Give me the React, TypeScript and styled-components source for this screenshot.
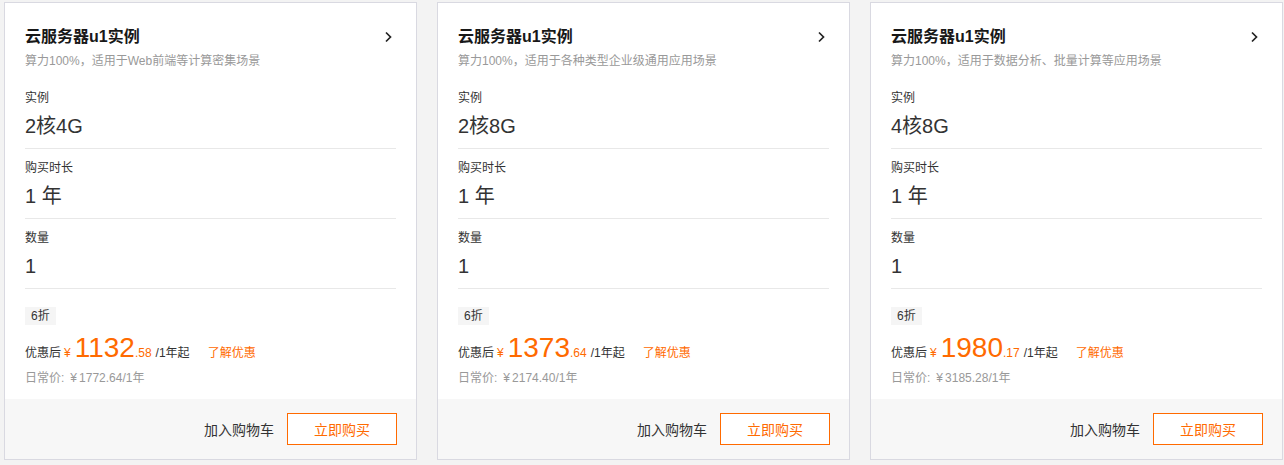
import React from "react";
import styled, { createGlobalStyle } from "styled-components";

const GlobalStyle = createGlobalStyle`
  html, body {
    margin: 0;
    padding: 0;
    background: #f3f3f3;
  }
  body {
    font-family: "Liberation Sans", Arial, "Noto Sans CJK SC", sans-serif;
    color: #333;
    -webkit-font-smoothing: antialiased;
  }
  * { box-sizing: border-box; }
`;

const Page = styled.div`
  display: flex;
  gap: 20px;
  padding: 2px 0 0 4px;
`;

const Card = styled.div`
  width: 413px;
  height: 458px;
  background: #fff;
  border: 1px solid #d9d9e1;
  display: flex;
  flex-direction: column;
`;

const Body = styled.div`
  flex: 1;
  padding: 22px 20px 0 20px;
`;

const Header = styled.div`
  display: flex;
  align-items: center;
  justify-content: space-between;
`;

const Title = styled.div`
  font-size: 16px;
  line-height: 24px;
  font-weight: 700;
  color: #181818;
`;

const Subtitle = styled.div`
  margin-top: 3px;
  margin-bottom: 9px;
  font-size: 12px;
  line-height: 18px;
  color: #999;
`;

const Section = styled.div`
  padding: 12px 0 10px;
  border-bottom: 1px solid #e8e8e8;
`;

const Label = styled.div`
  font-size: 12px;
  line-height: 14px;
  color: #333;
`;

const Value = styled.div`
  margin-top: 9px;
  font-size: 20px;
  line-height: 24px;
  color: #333;
`;

const Promo = styled.div`
  padding-top: 17px;
`;

const Tag = styled.span`
  display: inline-block;
  height: 18px;
  line-height: 18px;
  padding: 0 6px;
  font-size: 12px;
  color: #333;
  background: #f5f5f5;
`;

const PriceRow = styled.div`
  margin-top: 5px;
  display: flex;
  align-items: baseline;
  height: 36px;
  line-height: 36px;
  font-size: 12px;
  color: #333;
`;

const Orange = styled.span<{ $size?: number; $ml?: number }>`
  color: #ff6a00;
  font-size: ${(p) => p.$size ?? 12}px;
  margin-left: ${(p) => p.$ml ?? 0}px;
`;

const Unit = styled.span`
  margin-left: 4px;
  color: #333;
`;

const Learn = styled.a`
  margin-left: 18px;
  color: #ff6a00;
  text-decoration: none;
  font-size: 12px;
  cursor: pointer;
`;

const Regular = styled.div`
  margin-top: 3px;
  font-size: 12px;
  line-height: 18px;
  color: #999;
`;

const Yen = styled.span`
  margin: 0 2px 0 6px;
`;

const Footer = styled.div`
  height: 60px;
  background: #f7f7f7;
  display: flex;
  align-items: center;
  justify-content: flex-end;
  gap: 13px;
  padding-right: 19px;
`;

const CartLink = styled.span`
  font-size: 14px;
  color: #333;
  cursor: pointer;
`;

const BuyButton = styled.button`
  width: 110px;
  height: 32px;
  border: 1px solid #ff6a00;
  background: #fff;
  color: #ff6a00;
  font-size: 14px;
  font-family: inherit;
  padding: 0;
  cursor: pointer;
`;

const Chevron = () => (
  <svg width="16" height="16" viewBox="0 0 16 16" aria-hidden="true">
    <polyline
      points="6,3.5 10.5,8 6,12.5"
      fill="none"
      stroke="#222"
      strokeWidth="1.7"
      strokeLinecap="butt"
      strokeLinejoin="miter"
    />
  </svg>
);

type Plan = {
  desc: string;
  spec: string;
  int: string;
  dec: string;
  regular: string;
};

const plans: Plan[] = [
  {
    desc: "算力100%，适用于Web前端等计算密集场景",
    spec: "2核4G",
    int: "1132",
    dec: ".58",
    regular: "1772.64",
  },
  {
    desc: "算力100%，适用于各种类型企业级通用应用场景",
    spec: "2核8G",
    int: "1373",
    dec: ".64",
    regular: "2174.40",
  },
  {
    desc: "算力100%，适用于数据分析、批量计算等应用场景",
    spec: "4核8G",
    int: "1980",
    dec: ".17",
    regular: "3185.28",
  },
];

const ProductCard = ({ plan }: { plan: Plan }) => (
  <Card>
    <Body>
      <Header>
        <Title>云服务器u1实例</Title>
        <Chevron />
      </Header>
      <Subtitle>{plan.desc}</Subtitle>
      <Section>
        <Label>实例</Label>
        <Value>{plan.spec}</Value>
      </Section>
      <Section>
        <Label>购买时长</Label>
        <Value>1 年</Value>
      </Section>
      <Section>
        <Label>数量</Label>
        <Value>1</Value>
      </Section>
      <Promo>
        <Tag>6折</Tag>
        <PriceRow>
          <span>优惠后</span>
          <Orange $ml={3}>¥</Orange>
          <Orange $size={28} $ml={4}>
            {plan.int}
          </Orange>
          <Orange>{plan.dec}</Orange>
          <Unit>/1年起</Unit>
          <Learn>了解优惠</Learn>
        </PriceRow>
        <Regular>
          日常价:<Yen>¥</Yen>
          {plan.regular}/1年
        </Regular>
      </Promo>
    </Body>
    <Footer>
      <CartLink>加入购物车</CartLink>
      <BuyButton>立即购买</BuyButton>
    </Footer>
  </Card>
);

export default function App() {
  return (
    <>
      <GlobalStyle />
      <Page>
        {plans.map((p) => (
          <ProductCard key={p.int} plan={p} />
        ))}
      </Page>
    </>
  );
}
